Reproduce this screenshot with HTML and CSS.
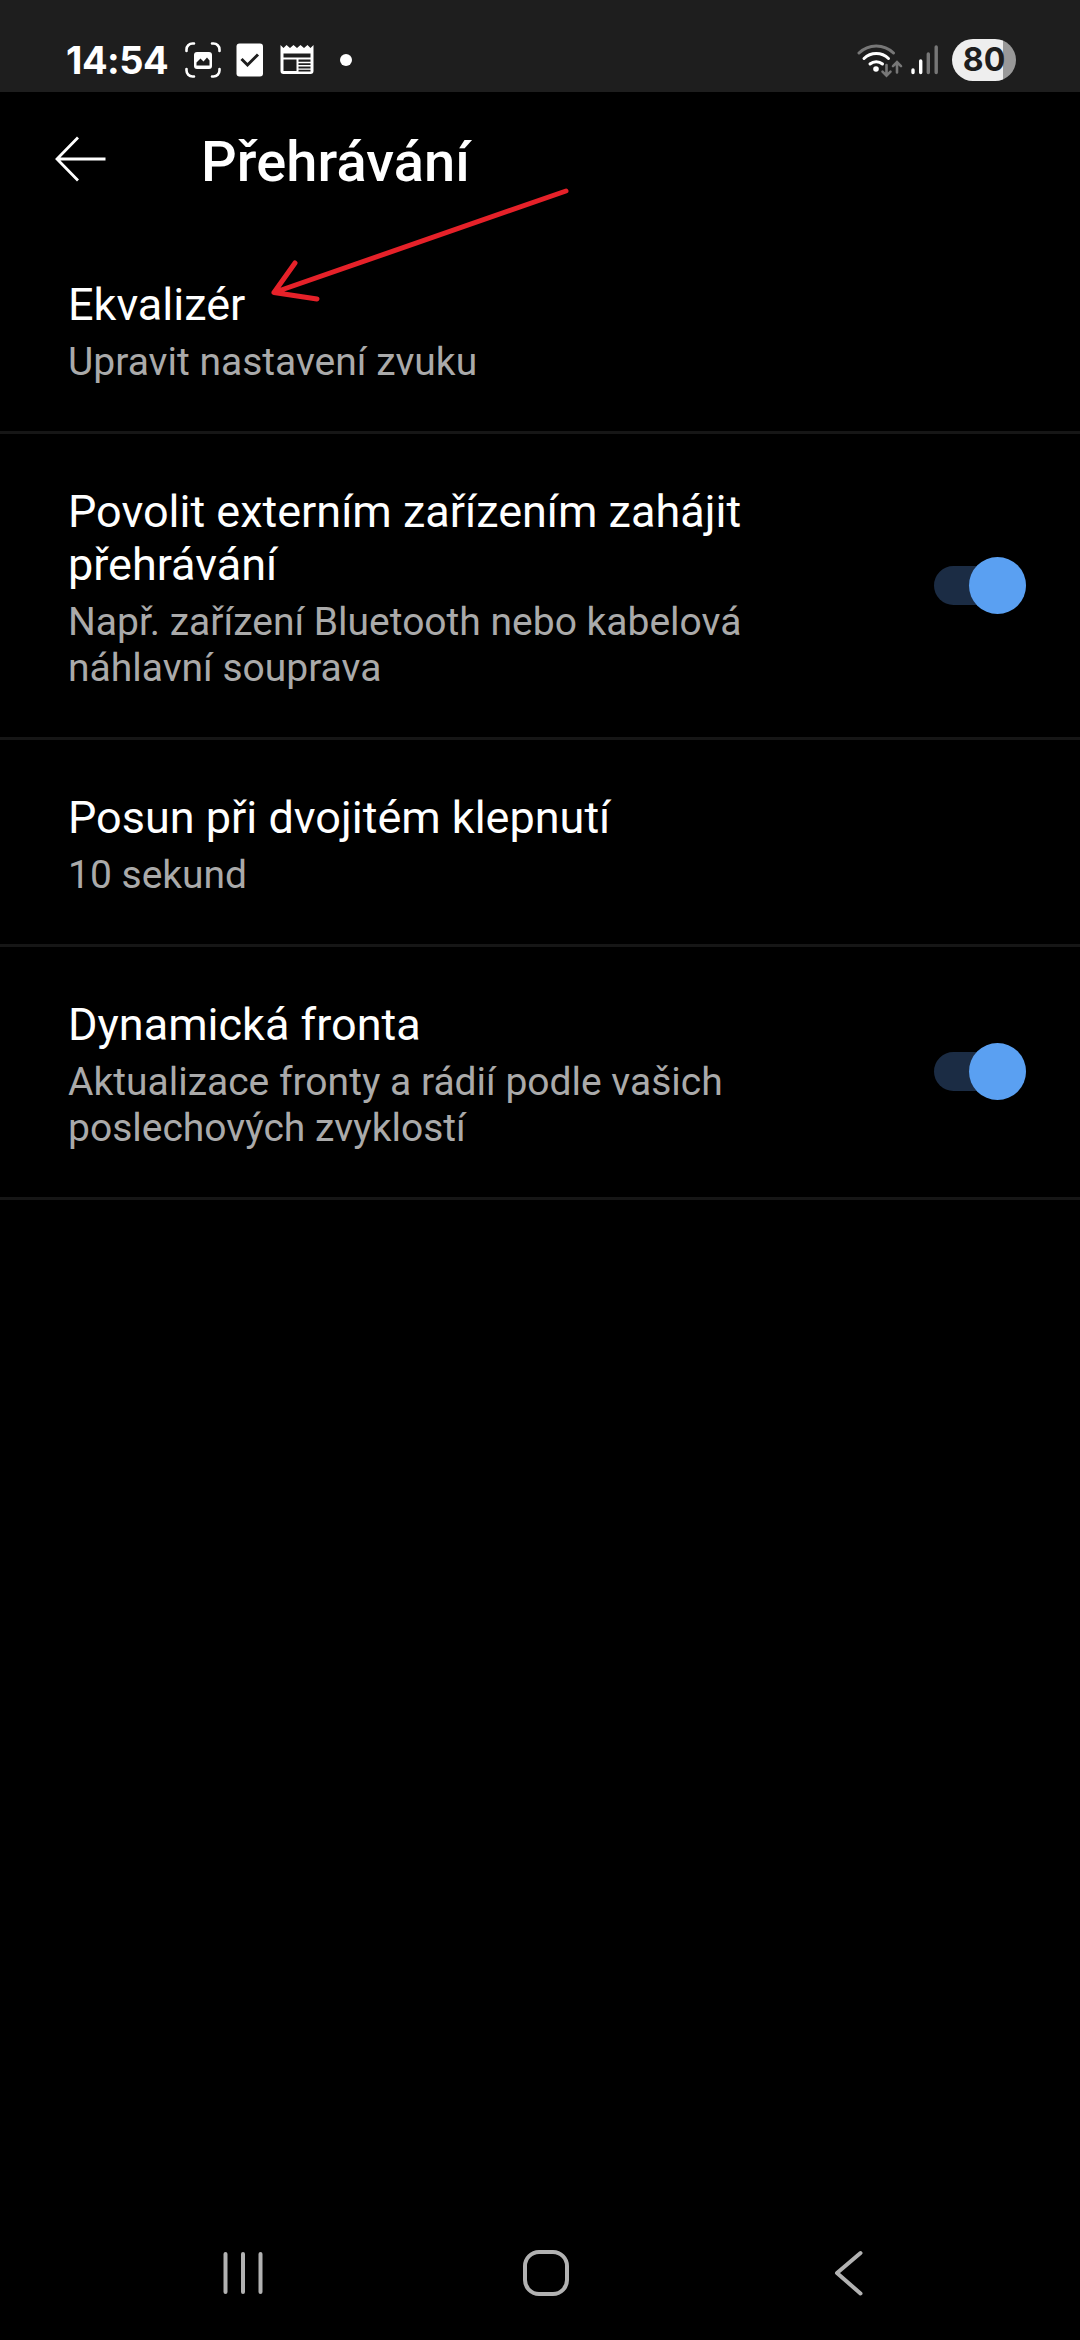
FILE: index.html
```html
<!DOCTYPE html>
<html lang="cs">
<head>
<meta charset="utf-8">
<title>Přehrávání</title>
<link rel="stylesheet" href="styles.css">
</head>
<body>
<div class="statusbar">
<span class="time">14:54</span>
<svg class="icon capture" width="36" height="36" viewBox="0 0 36 36">
<path d="M1.500 9V7.500a6 6 0 0 1 6-6H9M27 1.500h1.500a6 6 0 0 1 6 6V9M34.500 27v1.500a6 6 0 0 1-6 6H27M9 34.500H7.500a6 6 0 0 1-6-6V27" fill="none" stroke="#fff" stroke-width="2.600" stroke-linecap="round"/>
<rect x="9" y="10" width="18" height="17" rx="3" fill="#fff"/>
<path d="M11.500 23.500v-3l4-4 3 3 3.500-4 2.500 3v5z" fill="#1e1e1e"/>
</svg>
<svg class="icon check" width="28" height="34" viewBox="0 0 28 34">
<rect x="0.500" y="0.500" width="26.500" height="33" rx="3" fill="#fff"/>
<path d="M5.500 16l6 6L22 11.500" fill="none" stroke="#1e1e1e" stroke-width="3"/>
</svg>
<svg class="icon news" width="34" height="30" viewBox="0 0 34 30">
<path fill-rule="evenodd" fill="#fff" d="M.5 0l3 3 3-3 3.500 3 3.500-3L17 3l3.500-3L24 3l3.500-3 3 3 3-3v26a3 3 0 0 1-3 3h-27a3 3 0 0 1-3-3zM3.500 8.500v4h27v-4zM3.500 14.500V26h13V14.500zM18.500 14.500v2.300h12v-2.300zM18.500 18.200v1.800h12v-1.800zM18.500 21.600v1.800h12v-1.800zM18.500 24.800v1.700h12v-1.700z"/>
</svg>
<span class="dot"></span>
<svg class="icon wifi" width="46" height="36" viewBox="0 0 46 36">
<g fill="none" stroke-width="3" stroke-linecap="round">
<path d="M2 11a24.500 24.500 0 0 1 34.500 0" stroke="#777"/>
<path d="M7 16.500a17.500 17.500 0 0 1 24.500 0M13 22a9.500 9.500 0 0 1 12.500 0" stroke="#fff"/>
<path d="M29.500 23v10M25.500 29.700l4 4 4-4M40 30.500V21M36 24.200l4-4 4 4" stroke="#777" stroke-width="2.600"/>
</g>
<circle cx="19" cy="27" r="2.800" fill="#fff"/>
</svg>
<svg class="icon signal" width="28" height="30" viewBox="0 0 28 30">
<g fill="none" stroke-width="3.400" stroke-linecap="round">
<path d="M2 25v2.500M9.700 16v11.500" stroke="#fff"/>
<path d="M17.300 9v18.500M25.200 2v25.500" stroke="#777"/>
</g>
</svg>
<span class="battery">80</span>
</div>

<div class="header">
<svg width="52" height="46" viewBox="0 0 52 46"><path d="M23 1.500L2 23l21 21.500M2 23h48.500" fill="none" stroke="#fff" stroke-width="2.800"/></svg>
<h1>Přehrávání</h1>
</div>

<div class="list">
<div class="item">
<div class="text">
<div class="name">Ekvalizér</div>
<div class="desc">Upravit nastavení zvuku</div>
</div>
</div>
<div class="item">
<div class="text">
<div class="name">Povolit externím zařízením zahájit přehrávání</div>
<div class="desc">Např. zařízení Bluetooth nebo kabelová náhlavní souprava</div>
</div>
<div class="switch"><div class="knob"></div></div>
</div>
<div class="item">
<div class="text">
<div class="name">Posun při dvojitém klepnutí</div>
<div class="desc">10 sekund</div>
</div>
</div>
<div class="item">
<div class="text">
<div class="name">Dynamická fronta</div>
<div class="desc">Aktualizace fronty a rádií podle vašich poslechových zvyklostí</div>
</div>
<div class="switch"><div class="knob"></div></div>
</div>
</div>

<div class="navbar">
<svg width="40" height="46" viewBox="0 0 40 46"><path d="M2.500 4v38M20 4v38M37.500 4v38" stroke="#b2b2b2" stroke-width="4" stroke-linecap="round"/></svg>
<svg class="home" width="46" height="46" viewBox="0 0 46 46"><rect x="2" y="2" width="42" height="42" rx="14" fill="none" stroke="#b2b2b2" stroke-width="4"/></svg>
<svg width="30" height="46" viewBox="0 0 30 46"><path d="M26.500 3L3 23l23.500 20.500" fill="none" stroke="#b2b2b2" stroke-width="4" stroke-linecap="round" stroke-linejoin="round"/></svg>
</div>

<!-- hand-drawn pointer to the equalizer item -->
<svg class="pointer" width="310" height="130" viewBox="0 0 310 130"><path d="M301 13L9 114.500M30 85L9 114.500l43 6.500" fill="none" stroke="#e62129" stroke-width="5" stroke-linecap="round" stroke-linejoin="round"/></svg>
</body>
</html>
```
FILE: styles.css
```css
html, body {margin: 0; padding: 0;}
body {display: flex; flex-direction: column; position: relative; width: 1080px; height: 2340px; overflow: hidden; background-color: #000; color: #fff; font-family: Roboto, sans-serif;}
svg {display: block; flex: none;}

.statusbar {display: flex; align-items: center; box-sizing: border-box; height: 92px; padding: 28px 64px 0 66px; background-color: #1e1e1e;}
.time {width: 119px; font: 700 38px/64px Inter, sans-serif; letter-spacing: -0.5px;}
.check {margin-left: 15px;}
.news {margin-left: 16px;}
.dot {width: 12px; height: 12px; margin-left: 26px; border-radius: 50%; background-color: #fff;}
.wifi {margin-left: auto;}
.signal {margin-left: 8px;}
.battery {width: 64px; height: 42px; margin-left: 13px; border-radius: 21px; background: linear-gradient(90deg, #eee 51px, #999 51px); color: #1e1e1e; font: 700 32px/42px Inter, sans-serif; text-align: center;}

.header {display: flex; align-items: center; box-sizing: border-box; height: 135px; padding: 0 55px 1px;}
.header h1 {margin: 6px 0 0 94px; font-size: 56px; font-weight: 500; line-height: 66px; letter-spacing: 0.1px;}

.item {display: flex; align-items: center; justify-content: space-between; padding: 51px 54px 46px 68px; border-bottom: 3px solid #161616;}
.text {width: 720px;}
.name {font-size: 45px; line-height: 53px;}
.desc {margin-top: 8px; color: #aaa; font-size: 39px; line-height: 46px;}
.switch {display: flex; align-items: center; justify-content: flex-end; width: 92px; height: 39px; margin-bottom: 6px; border-radius: 20px; background-color: #1b2c44;}
.knob {flex: none; width: 57px; height: 57px; border-radius: 50%; background-color: #5aa0f2;}

.navbar {display: flex; align-items: center; justify-content: space-between; box-sizing: border-box; height: 134px; margin-top: auto; padding: 0 216px 0 223px;}
.home {margin-left: -6px;}
.pointer {position: absolute; left: 265px; top: 178px;}
```
